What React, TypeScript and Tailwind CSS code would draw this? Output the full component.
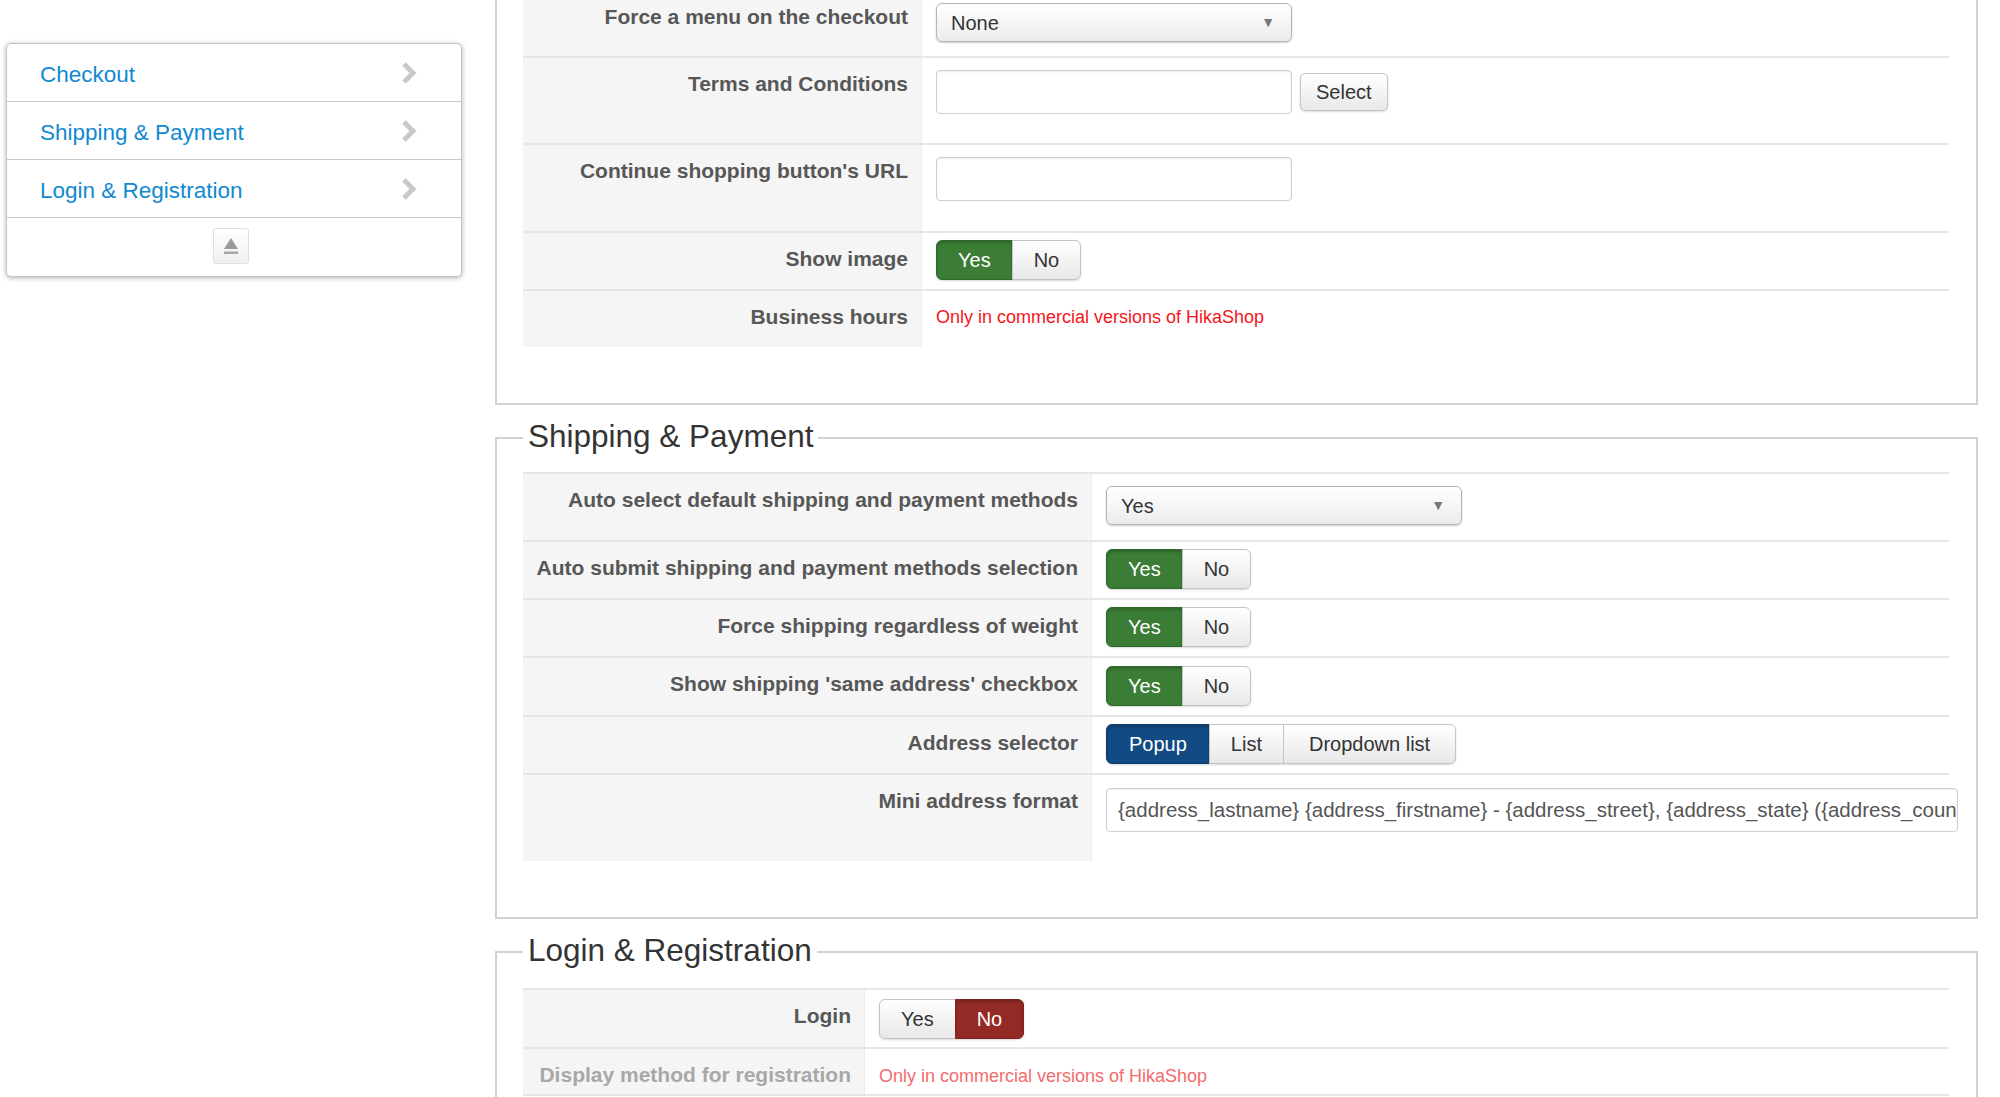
import React from "react";

const FONT = "font-['Liberation_Sans','Helvetica_Neue',Arial,sans-serif]";

type Choice = { label: string; pad?: string; active?: boolean; tone?: "green" | "red" | "blue" };

const TONES: Record<string, string> = {
  green: "bg-[#3b7d36] border-[#2f6a2b] text-white shadow-[inset_0_2px_3px_rgba(0,0,0,0.2)]",
  red: "bg-[#942a25] border-[#7e221e] text-white shadow-[inset_0_2px_3px_rgba(0,0,0,0.2)]",
  blue: "bg-[#124a83] border-[#0d3c6d] text-white shadow-[inset_0_2px_3px_rgba(0,0,0,0.2)]",
};

const Chevron = () => (
  <svg width="16" height="24" viewBox="0 0 16 24" className="shrink-0">
    <path d="M3 3 L12 12 L3 21" fill="none" stroke="#c9c9c9" strokeWidth="5" strokeLinejoin="miter" />
  </svg>
);

const NavItem = ({ label }: { label: string }) => (
  <div className="h-[58px] flex items-center justify-between pl-[33px] pr-[44px] border-b border-[#c9c9c9]">
    <span className="text-[22.5px] text-[#0f89d0] pt-[5px]">{label}</span>
    <Chevron />
  </div>
);

const ButtonGroup = ({ items }: { items: Choice[] }) => (
  <div className="inline-flex h-[40px] rounded-[6px] shadow-[0_1px_2px_rgba(0,0,0,0.15)]">
    {items.map((it, i) => (
      <button
        key={it.label}
        className={`h-full ${it.pad ?? "px-[21px]"} text-[20px] leading-none border ${i === 0 ? "rounded-l-[6px]" : "-ml-px"} ${
          i === items.length - 1 ? "rounded-r-[6px]" : ""
        } ${
          it.active && it.tone
            ? TONES[it.tone]
            : "bg-gradient-to-b from-white to-[#e8e8e8] border-[#c4c4c4] text-[#333]"
        }`}
      >
        {it.label}
      </button>
    ))}
  </div>
);

const YesNo = ({ yes }: { yes: boolean }) => (
  <ButtonGroup
    items={[
      { label: "Yes", active: yes, tone: "green" },
      { label: "No", active: !yes, tone: "red" },
    ]}
  />
);

const Dropdown = ({ value, width }: { value: string; width: string }) => (
  <div
    className={`${width} h-[39px] flex items-center justify-between pl-[14px] pr-[16px] rounded-[6px] border border-[#b4b4b4] bg-gradient-to-b from-white to-[#ececec] shadow-[0_1px_2px_rgba(0,0,0,0.2)] text-[20px] text-[#333]`}
  >
    <span>{value}</span>
    <span className="text-[14px] text-[#777]">▼</span>
  </div>
);

const TextBox = ({ value = "", width, height, size = "text-[20px]" }: { value?: string; width: string; height: string; size?: string }) => (
  <div
    className={`${width} ${height} ${size} flex items-center px-[11px] rounded-[4px] border border-[#cfcfcf] bg-white shadow-[inset_0_1px_2px_rgba(0,0,0,0.08)] text-[#555] overflow-hidden whitespace-nowrap`}
  >
    {value}
  </div>
);

const Commercial = ({ faded }: { faded?: boolean }) => (
  <span className={`text-[18px] leading-[24px] ${faded ? "text-[#f26b6b]" : "text-[#f5141b]"}`}>
    Only in commercial versions of HikaShop
  </span>
);

type RowProps = {
  label: string;
  labelWidth: string;
  height: string;
  padTop: string;
  faded?: boolean;
  children: React.ReactNode;
};

const Row = ({ label, labelWidth, height, padTop, faded, children }: RowProps) => (
  <div className={`flex ${height} border-t-2 border-[#e6e6e6]`}>
    <div
      className={`${labelWidth} shrink-0 bg-[#f5f5f5] border-r border-[#ececec] text-right pr-[13px] pt-[14px] text-[21px] leading-[24px] font-bold ${
        faded ? "text-[#a8a8a8]" : "text-[#575757]"
      }`}
    >
      {label}
    </div>
    <div className={`flex-1 min-w-0 pl-[14px] ${padTop} flex items-start gap-[8px]`}>{children}</div>
  </div>
);

const Section = ({ title, children }: { title: string; children: React.ReactNode }) => (
  <fieldset className="min-w-0 mt-[11px] border-2 border-[#d2d2d2] pl-[26px] pr-[27px] pt-[12px] pb-[56px]">
    <legend className="px-[5px] pb-[4px] text-[31.5px] leading-[40px] text-[#333]">{title}</legend>
    {children}
  </fieldset>
);

export default function App() {
  return (
    <div className={`${FONT} h-[1097px] w-[2000px] overflow-hidden bg-white flex gap-[33px]`}>
      {/* side menu */}
      <aside className="w-[462px] shrink-0 pl-[6px] pt-[43px]">
        <div className="rounded-[5px] border border-[#c4c4c4] bg-white shadow-[0_1px_5px_rgba(0,0,0,0.3)] overflow-hidden">
          <NavItem label="Checkout" />
          <NavItem label="Shipping & Payment" />
          <NavItem label="Login & Registration" />
          <div className="h-[58px] flex justify-center pt-[10px] pr-[6px]">
            <button className="h-[36px] w-[36px] rounded-[3px] border border-[#dedede] bg-gradient-to-b from-white to-[#f0f0f0] flex items-center justify-center">
              <svg width="18" height="20" viewBox="0 0 18 20">
                <path d="M9 2 L16 13 L2 13 Z" fill="#9a9a9a" />
                <rect x="2" y="15.5" width="14" height="2.5" fill="#a8a8a8" />
              </svg>
            </button>
          </div>
        </div>
      </aside>

      <main className="w-[1483px] shrink-0">
        {/* checkout options (continued) */}
        <div className="-mt-[11px] border-x-2 border-b-2 border-[#d2d2d2] pl-[26px] pr-[27px] pb-[56px]">
          <Row label="Force a menu on the checkout" labelWidth="w-[399px]" height="h-[67px]" padTop="pt-[12px]">
            <Dropdown value="None" width="w-[356px]" />
          </Row>
          <Row label="Terms and Conditions" labelWidth="w-[399px]" height="h-[87px]" padTop="pt-[12px]">
            <TextBox width="w-[356px]" height="h-[44px]" />
            <button className="mt-[3px] h-[38px] px-[15px] rounded-[5px] border border-[#c4c4c4] bg-gradient-to-b from-white to-[#e8e8e8] shadow-[0_1px_2px_rgba(0,0,0,0.15)] text-[20px] text-[#333]">
              Select
            </button>
          </Row>
          <Row label="Continue shopping button's URL" labelWidth="w-[399px]" height="h-[88px]" padTop="pt-[12px]">
            <TextBox width="w-[356px]" height="h-[44px]" />
          </Row>
          <Row label="Show image" labelWidth="w-[399px]" height="h-[58px]" padTop="pt-[7px]">
            <YesNo yes />
          </Row>
          <Row label="Business hours" labelWidth="w-[399px]" height="h-[58px]" padTop="pt-[14px]">
            <Commercial />
          </Row>
        </div>

        <Section title="Shipping & Payment">
          <Row label="Auto select default shipping and payment methods" labelWidth="w-[569px]" height="h-[68px]" padTop="pt-[12px]">
            <Dropdown value="Yes" width="w-[356px]" />
          </Row>
          <Row label="Auto submit shipping and payment methods selection" labelWidth="w-[569px]" height="h-[58px]" padTop="pt-[7px]">
            <YesNo yes />
          </Row>
          <Row label="Force shipping regardless of weight" labelWidth="w-[569px]" height="h-[58px]" padTop="pt-[7px]">
            <YesNo yes />
          </Row>
          <Row label="Show shipping 'same address' checkbox" labelWidth="w-[569px]" height="h-[59px]" padTop="pt-[8px]">
            <YesNo yes />
          </Row>
          <Row label="Address selector" labelWidth="w-[569px]" height="h-[58px]" padTop="pt-[7px]">
            <ButtonGroup
              items={[
                { label: "Popup", pad: "px-[22px]", active: true, tone: "blue" },
                { label: "List", pad: "px-[21px]" },
                { label: "Dropdown list", pad: "px-[25px]" },
              ]}
            />
          </Row>
          <Row label="Mini address format" labelWidth="w-[569px]" height="h-[88px]" padTop="pt-[13px]">
            <div className="shrink-0">
              <TextBox
                width="w-[852px]"
                height="h-[44px]"
                size="text-[20.5px]"
                value="{address_lastname} {address_firstname} - {address_street}, {address_state} ({address_country})"
              />
            </div>
          </Row>
        </Section>

        <Section title="Login & Registration">
          <div className="pt-[2px]">
            <Row label="Login" labelWidth="w-[342px]" height="h-[59px]" padTop="pt-[9px]">
              <YesNo yes={false} />
            </Row>
            <div className="border-b-2 border-[#e6e6e6]">
              <Row label="Display method for registration" labelWidth="w-[342px]" height="h-[47px]" padTop="pt-[15px]" faded>
                <Commercial faded />
              </Row>
            </div>
          </div>
        </Section>
      </main>
    </div>
  );
}
